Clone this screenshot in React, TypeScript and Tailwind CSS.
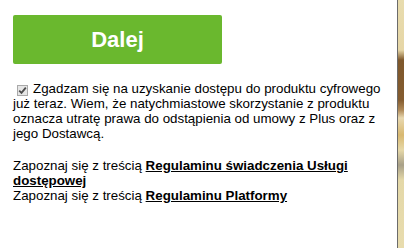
import React from "react";

export default function App() {
  return (
    <div className="relative h-[248px] w-[404px] overflow-hidden bg-white font-['Liberation_Sans',Arial,sans-serif] text-black">
      <div className="flex w-[392px] flex-col pl-[13px] pt-[15px]">
        <button className="flex h-[49px] w-[209px] items-center justify-center rounded-[2px] bg-[#6ab82e] text-[22px] font-bold text-white">
          Dalej
        </button>
        <div className="mt-[17px] text-[13.33px] leading-[15px]">
          <span className="relative top-[1px] mr-[5px] ml-[4px] inline-flex h-[11px] w-[11px] items-center justify-center border border-[#a9a9a9] bg-[#e6e6e6] align-[-1px]">
            <svg width="9" height="9" viewBox="0 0 9 9">
              <path d="M1.2 4.6 L3.5 6.9 L7.8 1.6" fill="none" stroke="#4d4d4d" strokeWidth="1.8" />
            </svg>
          </span>
          Zgadzam się na uzyskanie dostępu do produktu cyfrowego już teraz. Wiem, że natychmiastowe skorzystanie z produktu oznacza utratę prawa do odstąpienia od umowy z Plus oraz z jego Dostawcą.
        </div>
        <div className="mt-[17px] text-[13.33px] leading-[15px]">
          <p>
            Zapoznaj się z treścią <a className="font-bold underline">Regulaminu świadczenia Usługi dostępowej</a>
          </p>
          <p>
            Zapoznaj się z treścią <a className="font-bold underline">Regulaminu Platformy</a>
          </p>
        </div>
      </div>
      <div className="absolute top-0 right-0 flex h-full">
        <div className="w-[1px] bg-[#6b6b6b]" />
        <div className="w-[6px] bg-[linear-gradient(to_bottom,#e8dcae_0px,#e6d6a6_50px,#7f582c_60px,#845c30_100px,#b08a58_110px,#e8d8b0_118px,#d8b870_135px,#e6d8a8_150px,#a8a088_165px,#e4d8a8_180px,#e8dcae_248px)]" />
      </div>
    </div>
  );
}
